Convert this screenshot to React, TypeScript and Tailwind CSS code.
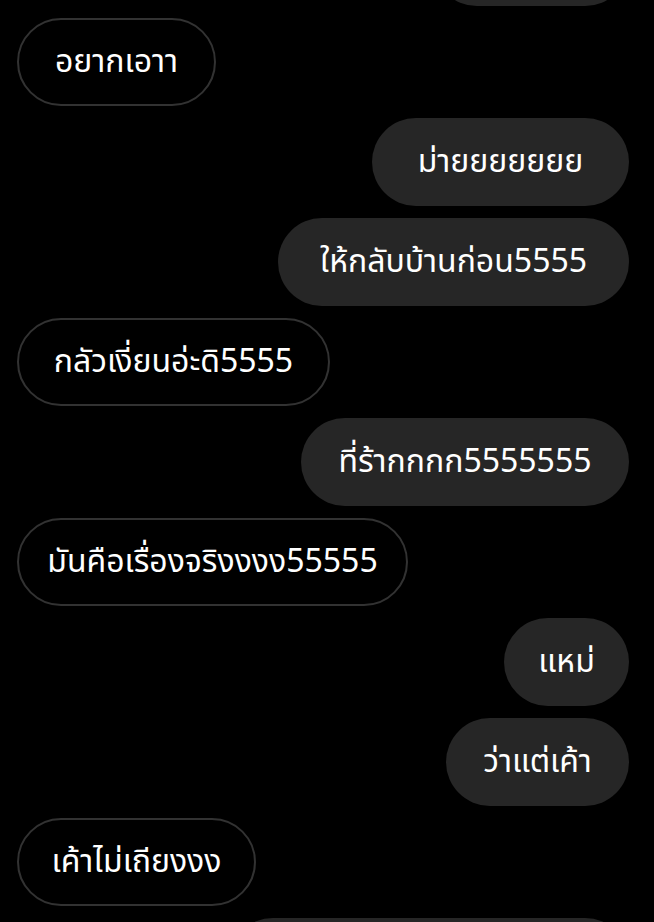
const messages = [
  { text: '', mine: true, width: 'w-[196px]' },
  { text: 'อยากเอาา', mine: false, width: 'w-[199px]' },
  { text: 'ม่ายยยยยยย', mine: true, width: 'w-[257px]' },
  { text: 'ให้กลับบ้านก่อน5555', mine: true, width: 'w-[351px]' },
  { text: 'กลัวเงี่ยนอ่ะดิ5555', mine: false, width: 'w-[313px]' },
  { text: 'ที่ร้ากกกก5555555', mine: true, width: 'w-[328px]' },
  { text: 'มันคือเรื่องจริงงงง55555', mine: false, width: 'w-[391px]' },
  { text: 'แหม่', mine: true, width: 'w-[125px]' },
  { text: 'ว่าแต่เค้า', mine: true, width: 'w-[183px]' },
  { text: 'เค้าไม่เถียงงง', mine: false, width: 'w-[239px]' },
  { text: '', mine: true, width: 'w-[400px]' },
];

function Bubble({ text, mine, width }: { text: string; mine: boolean; width: string }) {
  return (
    <div className={mine ? 'flex justify-end' : 'flex justify-start'}>
      <div
        className={
          mine
            ? `${width} h-[88px] rounded-full bg-[#262626] flex items-center justify-center text-white text-[32px] leading-none whitespace-nowrap`
            : `${width} h-[88px] rounded-full border-2 border-[#323232] bg-black flex items-center justify-center text-white text-[32px] leading-none whitespace-nowrap`
        }
      >
        {text}
      </div>
    </div>
  );
}

export default function App() {
  return (
    <div
      className="h-[922px] w-full overflow-hidden bg-black pl-[17px] pr-[25px] text-white"
      style={{ fontFamily: '"Noto Sans Thai", "Noto Sans", "DejaVu Sans", sans-serif' }}
    >
      <div className="-mt-[82px] flex flex-col gap-3">
        {messages.map((m, i) => (
          <Bubble key={i} text={m.text} mine={m.mine} width={m.width} />
        ))}
      </div>
    </div>
  );
}
